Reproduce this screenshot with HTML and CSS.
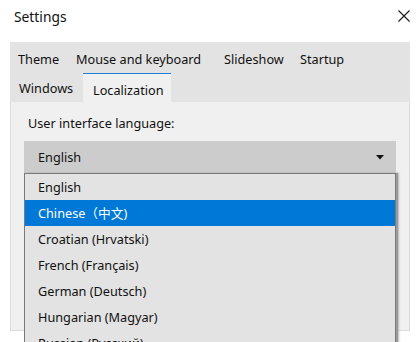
FILE: index.html
```html
<!DOCTYPE html>
<html>
<head>
<meta charset="utf-8">
<link rel="stylesheet" href="styles.css">
</head>
<body>
<div class="window">
  <header class="titlebar">
    <span class="title">Settings</span>
    <svg class="close" width="12" height="12" viewBox="0 0 12 12"><path d="M0.5 0.5 L11.5 11.5 M11.5 0.5 L0.5 11.5" stroke="#1a1a1a" stroke-width="1.1" fill="none"/></svg>
  </header>
  <div class="tabs">
    <div class="tabrow row1">
      <div class="tab t-theme">Theme</div>
      <div class="tab t-mouse">Mouse and keyboard</div>
      <div class="tab t-slide">Slideshow</div>
      <div class="tab t-start">Startup</div>
    </div>
    <div class="tabrow row2">
      <div class="tab t-win">Windows</div>
      <div class="tab t-loc selected">Localization</div>
    </div>
    <div class="panel">
      <div class="label">User interface language:</div>
      <div class="combo">
        <span>English</span>
        <svg class="arrow" width="8" height="5" viewBox="0 0 8 5"><path d="M0 0 H8 L4 4.5 Z" fill="#111"/></svg>
        <ul class="dropdown">
          <li>English</li>
          <li class="active">Chinese（中文)</li>
          <li>Croatian (Hrvatski)</li>
          <li>French (Français)</li>
          <li>German (Deutsch)</li>
          <li>Hungarian (Magyar)</li>
          <li>Russian (Русский)</li>
        </ul>
      </div>
    </div>
  </div>
</div>
</body>
</html>
```
FILE: styles.css
```css
* { box-sizing: border-box; }
html, body { margin: 0; padding: 0; background: #fff; }
body {
  font-family: "Noto Sans", "Noto Sans CJK SC", sans-serif;
  font-size: 12.7px;
  color: #111;
  width: 420px;
  height: 342px;
  overflow: hidden;
}
.titlebar {
  height: 42px;
  display: flex;
  align-items: flex-start;
  justify-content: space-between;
  padding: 7px 10px 0 14px;
}
.title { font-size: 13.8px; line-height: 20px; }
.close { margin-top: 3px; }
.tabs {
  margin: 0 10px;
  background: #e3e3e3;
}
.tabrow { display: flex; }
.row1 { height: 31px; }
.row2 { height: 29px; }
.tab {
  line-height: 20px;
  white-space: nowrap;
}
.row1 .tab { padding-top: 7px; }
.t-theme { padding-left: 8px; width: 66px; }
.t-mouse { width: 148px; }
.t-slide { width: 76px; }
.t-start { width: 60px; }
.t-win { padding-left: 9px; width: 73px; padding-top: 5px; }
.t-loc {
  padding-left: 10px;
  width: 88px;
  padding-top: 6px;
}
.selected {
  background: #f0f0f0;
  border-top: 1px solid #1a7fd4;
}
.panel {
  height: 229px;
  background: #f0f0f0;
  border: 1px solid #dcdcdc;
  border-top: none;
  padding: 12px 13px 0 13px;
  position: relative;
}
.label { padding-left: 4px; line-height: 18px; }
.combo {
  margin-top: 9px;
  height: 32px;
  background: #cccccc;
  display: flex;
  align-items: center;
  justify-content: space-between;
  padding: 0 12px 0 14px;
  position: relative;
}
.arrow { margin-top: 1px; }
.dropdown {
  position: absolute;
  left: 0;
  top: 32px;
  width: 372px;
  margin: 0;
  padding: 0;
  list-style: none;
  background: #e3e3e3;
  border: 1px solid #7a7a7a;
  border-bottom: none;
  box-shadow: 2px 0 1px #9a9a9a, 3px 0 2px #c4c4c4;
}
.dropdown li {
  height: 26px;
  line-height: 26px;
  padding-left: 13px;
  white-space: nowrap;
}
.dropdown li.active { background: #0078d7; color: #fff; }
```
